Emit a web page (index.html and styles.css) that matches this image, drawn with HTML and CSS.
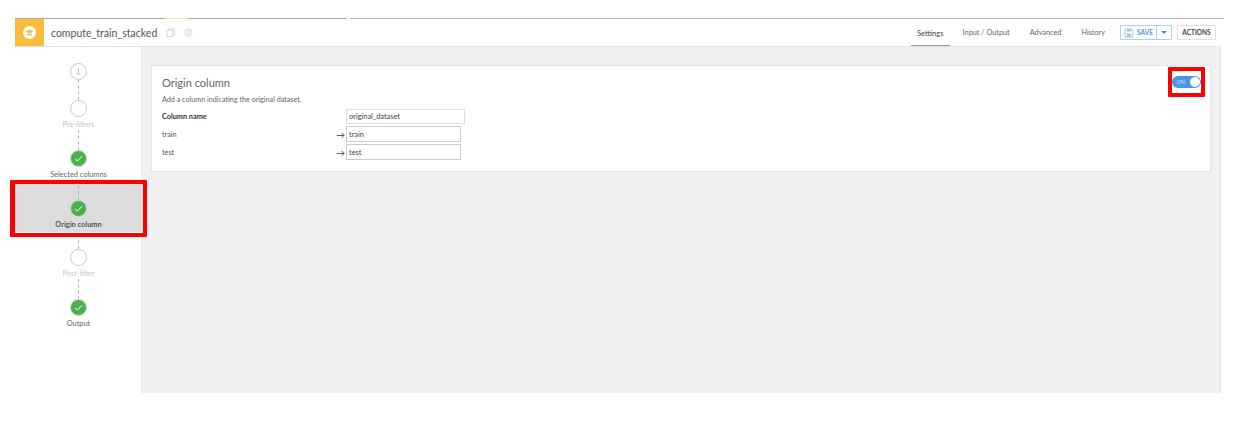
FILE: index.html
```html
<!DOCTYPE html>
<html>
<head>
    <title>compute_train_stacked</title>
    <link rel="stylesheet" href="styles.css">
</head>
<body>

<div class="frame">
    <div class="topline">
        <span class="seg seg-a"></span><span class="seg seg-yellow"></span><span class="seg seg-b"></span><span class="seg seg-c"></span>
    </div>

    <div class="header">
        <div class="logo">
            <span class="logo-circle">
                <svg width="9" height="9" viewBox="0 0 9 9"><path d="M0.5 3.5 4.5 1.5 8.5 3.5 4.5 5.5Z" fill="#fbbc3c"/><path d="M2 5.2V6.8C3.5 8 5.5 8 7 6.8V5.2L4.5 6.5Z" fill="#fbbc3c"/></svg>
            </span>
        </div>
        <div class="recipe-name">compute_train_stacked</div>
        <svg class="head-icon" width="9" height="9" viewBox="0 0 10 10"><rect x="3" y="1" width="6" height="7" fill="none" stroke="#d4d4d4"/><rect x="1" y="2.5" width="6" height="7" fill="#fff" stroke="#d4d4d4"/></svg>
        <svg class="head-icon icon-two" width="9" height="9" viewBox="0 0 10 10"><circle cx="5" cy="5" r="4" fill="none" stroke="#d4d4d4"/><path d="M6.5 3.2H4V5H6V6.8H3.5" fill="none" stroke="#d4d4d4" stroke-width="0.8"/></svg>

        <div class="tabs">
            <a class="tab tab-active">Settings</a>
            <a class="tab">Input / Output</a>
            <a class="tab">Advanced</a>
            <a class="tab">History</a>
        </div>
        <div class="save-group">
            <button class="save-btn">
                <svg width="10" height="10" viewBox="0 0 10 10"><path d="M1 1H8L9 2V9H1Z" fill="none" stroke="#9cc8f2"/><rect x="3" y="1" width="4" height="2.5" fill="#9cc8f2"/><rect x="2.8" y="5.5" width="4.4" height="3.5" fill="#9cc8f2"/></svg>
                SAVE
            </button>
            <button class="save-caret"><span class="caret"></span></button>
        </div>
        <button class="actions-btn">ACTIONS</button>
    </div>

    <div class="body-row">
        <div class="sidebar">
            <div class="step step-first">
                <span class="circle">
                    <svg width="9" height="9" viewBox="0 0 9 9"><path d="M4.5 1V8M2 5.5 4.5 8 7 5.5" fill="none" stroke="#c4c4c4"/></svg>
                </span>
            </div>
            <div class="step step-off">
                <span class="line"></span>
                <span class="circle"></span>
                <span class="step-label">Pre-filters</span>
            </div>
            <div class="step">
                <span class="line"></span>
                <span class="circle circle-done"><svg width="9" height="9" viewBox="0 0 9 9"><path d="M1 5 3.4 7 8 2.2" fill="none" stroke="#fff"/></svg></span>
                <span class="step-label">Selected columns</span>
            </div>
            <div class="step step-active">
                <span class="line"></span>
                <span class="circle circle-done"><svg width="9" height="9" viewBox="0 0 9 9"><path d="M1 5 3.4 7 8 2.2" fill="none" stroke="#fff"/></svg></span>
                <span class="step-label">Origin column</span>
            </div>
            <div class="step step-off step-after">
                <span class="line"></span>
                <span class="circle"></span>
                <span class="step-label">Post-filter</span>
            </div>
            <div class="step">
                <span class="line"></span>
                <span class="circle circle-done"><svg width="9" height="9" viewBox="0 0 9 9"><path d="M1 5 3.4 7 8 2.2" fill="none" stroke="#fff"/></svg></span>
                <span class="step-label">Output</span>
            </div>
        </div>

        <div class="main">
            <div class="card">
                <div class="toggle"><span class="toggle-text">ON</span><span class="knob"></span></div>
                <h2 class="card-title">Origin column</h2>
                <p class="card-desc">Add a column indicating the original dataset.</p>
                <div class="row row-name">
                    <label class="row-label label-bold">Column name</label>
                    <input class="field field-wide" type="text" value="original_dataset">
                </div>
                <div class="row">
                    <label class="row-label">train</label>
                    <span class="arrow">&#8594;</span>
                    <input class="field" type="text" value="train">
                </div>
                <div class="row">
                    <label class="row-label">test</label>
                    <span class="arrow">&#8594;</span>
                    <input class="field" type="text" value="test">
                </div>
            </div>
        </div>
    </div>
</div>

<!-- red annotation boxes drawn over the screenshot -->
<div class="mark mark-step"></div>
<div class="mark mark-toggle"></div>

</body>
</html>
```

FILE: styles.css
```css
html, body {
    height: 421px;
    overflow: hidden;
}
body {
    margin: 0;
    background-color: #fff;
    font-family: Lato, "Liberation Sans", sans-serif;
    font-size: 7.4px;
    color: #555;
    position: relative;
}
.frame {
    margin: 18px 0 0 15px;
    width: 1206px;
    height: 375px;
    display: flex;
    flex-direction: column;
}
.topline {
    display: flex;
    height: 1px;
    width: 1209px;
    flex: none;
}
.seg {
    display: block;
    height: 1px;
    background-color: #a9a9a9;
}
.seg-a { width: 150px; }
.seg-yellow { width: 23px; background-color: #fbe49a; }
.seg-b { width: 159px; }
.seg-c { width: 874px; margin-left: 3px; background-color: #b5b5b5; }

.header {
    height: 27px;
    flex: none;
    display: flex;
    align-items: center;
    background-color: #fff;
    border-bottom: 1px solid #e2e2e2;
}
.logo {
    width: 29px;
    height: 27px;
    background-color: #fbbc3c;
    display: flex;
    align-items: center;
    justify-content: center;
}
.logo-circle {
    width: 13px;
    height: 13px;
    border-radius: 50%;
    background-color: #fff;
    display: flex;
    align-items: center;
    justify-content: center;
}
.recipe-name {
    margin-left: 7px;
    font-size: 10.5px;
    color: #555;
}
.head-icon {
    margin-left: 9px;
}
.icon-two {
    margin-left: 9px;
}
.tabs {
    margin-left: auto;
    display: flex;
    height: 27px;
}
.tab {
    padding: 0 6px;
    margin-right: 8px;
    line-height: 28px;
    font-size: 7.3px;
    color: #666;
    height: 27px;
    box-sizing: border-box;
}
.tab-active {
    color: #444;
    font-size: 7.6px;
    margin-right: 7px;
    border-bottom: 1px solid #999;
}
.save-group {
    display: flex;
    margin-left: 1px;
    height: 15px;
}
button {
    font-family: Lato, "Liberation Sans", sans-serif;
    font-size: 6.5px;
    padding: 0;
    background-color: #fff;
    box-sizing: border-box;
}
.save-btn {
    width: 37px;
    height: 15px;
    border: 1px solid #a9d2f7;
    color: #4a9bea;
    font-weight: 700;
    display: flex;
    align-items: center;
    justify-content: center;
    gap: 3px;
}
.save-caret {
    width: 15px;
    height: 15px;
    border: 1px solid #a9d2f7;
    border-left: 0;
    display: flex;
    align-items: center;
    justify-content: center;
}
.caret {
    width: 0;
    height: 0;
    border-left: 3px solid transparent;
    border-right: 3px solid transparent;
    border-top: 3px solid #3b8fe0;
}
.actions-btn {
    width: 39px;
    height: 15px;
    margin-left: 5px;
    margin-right: 5px;
    border: 1px solid #e2e2e2;
    color: #444;
    font-weight: 700;
}

.body-row {
    flex: 1;
    display: flex;
}
.sidebar {
    width: 126px;
    flex: none;
    background-color: #fff;
    padding-top: 16px;
    box-sizing: border-box;
}
.step {
    display: flex;
    flex-direction: column;
    align-items: center;
    height: 50px;
    margin-right: -1px;
}
.step-first {
    height: 17px;
}
.line {
    display: block;
    height: 20px;
    border-left: 1px dashed #b5b5b5;
    flex: none;
}
.circle {
    width: 17px;
    height: 17px;
    box-sizing: border-box;
    flex: none;
    border: 1px solid #c9c9c9;
    border-radius: 50%;
    background-color: #fff;
    display: flex;
    align-items: center;
    justify-content: center;
}
.circle-done {
    background-color: #4caf50;
    border-color: #d8d8d8;
}
.step-label {
    margin-top: 2px;
    line-height: 12px;
    font-size: 7.4px;
    color: #666;
    white-space: nowrap;
}
.step-off .step-label {
    color: #c4c4c4;
}
.step-active {
    height: 52px;
    background-color: #dcdcdc;
    box-shadow: 1px 0 0 #dcdcdc;
    position: relative;
}
.step-active .step-label {
    font-weight: 700;
    color: #555;
}
.step-after {
    margin-top: -3px;
}

.main {
    flex: 1;
    background-color: #f0f0f0;
    border-left: 1px solid #e8e8e8;
    border-right: 1px solid #e0e0e0;
    padding: 18px 9px 0 9px;
}
.card {
    background-color: #fff;
    border: 1px solid #e4e4e4;
    height: 107px;
    box-sizing: border-box;
    padding: 9px 10px 0;
    position: relative;
}
.card-title {
    margin: 0;
    font-size: 11px;
    line-height: 15px;
    font-weight: 400;
    color: #666;
}
.card-desc {
    margin: 5px 0 0;
    font-size: 7.2px;
    line-height: 10px;
    color: #666;
}
.row {
    display: flex;
    align-items: center;
    height: 16px;
    margin-top: 2px;
}
.row-name {
    margin-top: 4px;
    height: 15px;
}
.row-label {
    width: 174px;
    flex: none;
    font-size: 7.3px;
    color: #555;
}
.label-bold {
    font-weight: 700;
    color: #333;
    width: 184px;
}
.arrow {
    width: 10px;
    flex: none;
    font-size: 9px;
    color: #444;
}
.field {
    width: 115px;
    height: 16px;
    box-sizing: border-box;
    border: 1px solid #ccc;
    padding: 0 2px;
    font-family: Lato, "Liberation Sans", sans-serif;
    font-size: 7.4px;
    color: #444;
    background-color: #fff;
}
.field-wide {
    width: 119px;
    height: 15px;
    border-color: #ddd;
}
.toggle {
    position: absolute;
    top: 10px;
    right: 9px;
    width: 29px;
    height: 12px;
    border-radius: 6px;
    background-color: #4a97e8;
}
.toggle-text {
    position: absolute;
    left: 5px;
    top: 3px;
    font-size: 5px;
    line-height: 6px;
    color: #d8e8fa;
}
.knob {
    position: absolute;
    right: 1px;
    top: 1px;
    width: 10px;
    height: 10px;
    border-radius: 50%;
    background-color: #fff;
}

.mark {
    position: absolute;
    box-sizing: border-box;
    border: 4px solid #f00;
    border-radius: 1px;
}
.mark-step {
    left: 10px;
    top: 180px;
    width: 137px;
    height: 57px;
    border-left-width: 5px;
}
.mark-toggle {
    left: 1168px;
    top: 67px;
    width: 37px;
    height: 30px;
}
```
